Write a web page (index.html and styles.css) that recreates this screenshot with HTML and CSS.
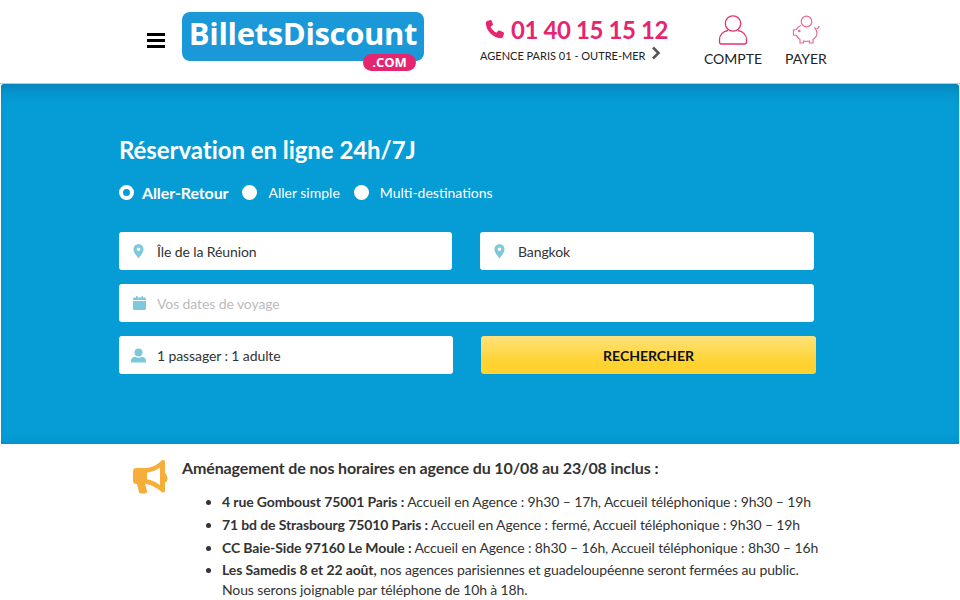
FILE: index.html
```html
<!DOCTYPE html>
<html lang="fr">
<head>
    <meta charset="UTF-8">
    <meta name="viewport" content="width=device-width, initial-scale=1.0">
    <title>BilletsDiscount</title>
    <link rel="stylesheet" href="styles.css">
</head>
<body>
    <header class="topbar">
        <div class="burger"><span></span><span></span><span></span></div>
        <div class="logo">
            <span class="logo-name">BilletsDiscount</span>
            <span class="logo-com">.COM</span>
        </div>
        <div class="phone">
            <div class="phone-number">
                <svg class="phone-icon" viewBox="0 0 24 24"><path d="M6.6 1.2 2.6 2.4C1.4 2.9.9 4 1 5.4c.6 9 8.600 17 17.600 17.600 1.400.1 2.500-.4 3-1.600l1.200-4c.2-.7-.1-1.300-.8-1.600l-4.600-2c-.6-.3-1.200-.1-1.600.4l-1.900 2.400c-3.200-1.500-5.700-4-7.200-7.200l2.400-1.900c.5-.4.700-1 .4-1.600l-2-4.600C7.900 1.300 7.300 1 6.600 1.200z"/></svg>
                <span>01 40 15 15 12</span>
            </div>
            <div class="phone-agency">
                <span>AGENCE PARIS 01 - OUTRE-MER</span>
                <svg class="chevron" viewBox="0 0 10 14"><path d="M2 1.500 7.500 7 2 12.500" /></svg>
            </div>
        </div>
        <a class="account">
            <svg class="account-icon" viewBox="0 0 30 30"><circle cx="15" cy="8.500" r="7.700"/><path d="M10 15.500C5 16.500 1.500 20 1.500 24.500v2.500c0 1.300.8 2 2 2h23c1.200 0 2-.7 2-2v-2.500c0-4.500-3.500-8-8.500-9"/></svg>
            <span>COMPTE</span>
        </a>
        <a class="pay">
            <svg class="pay-icon" viewBox="0 0 30 30"><circle cx="15.500" cy="6.500" r="5.300"/><path d="M10 10.500C7.500 11.500 6 13 5.500 14.500L2.500 15v5l3 .5c.7 1.700 1.800 3 3.500 4V28h3.500v-2c2 .5 4 .5 6 0v2H22v-3.500c2.500-1.700 4-4 4-6.500 0-2.200-1-4-2.500-5.500"/><path d="M25.500 13.500c1.500 0 2.500-1 2.500-2.500"/><circle cx="8.300" cy="16" r=".7"/></svg>
            <span>PAYER</span>
        </a>
    </header>

    <section class="search">
        <h1>Réservation en ligne 24h/7J</h1>
        <div class="trip-types">
            <span class="radio radio-on"></span>
            <span class="trip-label trip-label-on">Aller-Retour</span>
            <span class="radio"></span>
            <span class="trip-label">Aller simple</span>
            <span class="radio"></span>
            <span class="trip-label">Multi-destinations</span>
        </div>
        <div class="form-row">
            <div class="field field-from">
                <svg class="field-icon" viewBox="0 0 12 16"><path fill-rule="evenodd" d="M6 0C2.700 0 .5 2.400.5 5.500.5 9 4 13 6 15.500 8 13 11.500 9 11.500 5.500 11.500 2.400 9.300 0 6 0zm0 3.500a2 2 0 1 1 0 4 2 2 0 0 1 0-4z"/></svg>
                <span>Île de la Réunion</span>
            </div>
            <div class="field field-to">
                <svg class="field-icon" viewBox="0 0 12 16"><path fill-rule="evenodd" d="M6 0C2.700 0 .5 2.400.5 5.500.5 9 4 13 6 15.500 8 13 11.500 9 11.500 5.500 11.500 2.400 9.300 0 6 0zm0 3.500a2 2 0 1 1 0 4 2 2 0 0 1 0-4z"/></svg>
                <span>Bangkok</span>
            </div>
        </div>
        <div class="form-row">
            <div class="field field-dates">
                <svg class="field-icon field-icon-cal" viewBox="0 0 13 14"><path d="M0 5h13v7.500c0 .8-.6 1.500-1.500 1.500h-10C.6 14 0 13.300 0 12.500zM1.500 1.500H3V0h1.500v1.500h4V0H10v1.500h1.500c.9 0 1.500.7 1.500 1.500v1H0V3c0-.8.6-1.500 1.500-1.500z"/></svg>
                <span class="placeholder">Vos dates de voyage</span>
            </div>
        </div>
        <div class="form-row form-row-last">
            <div class="field field-people">
                <svg class="field-icon field-icon-wide" viewBox="0 0 15 14"><circle cx="7.500" cy="4" r="4"/><path d="M0 14v-2c0-2 1.500-3.500 4-3.800 2 1.300 5 1.300 7 0 2.500.3 4 1.800 4 3.800v2z"/></svg>
                <span>1 passager : 1 adulte</span>
            </div>
            <button class="submit">RECHERCHER</button>
        </div>
    </section>

    <section class="notice">
        <svg class="notice-icon" viewBox="0 0 36 36"><path d="M31 1c-1 0-1.500.5-2 1-4 4-10 7-15 7H4C2 9 1 10.500 1 12v10c0 1.500 1 3 3 3h1l2 8c.3 1 1 1.500 2 1.500h4c1.500 0 2.300-1.300 2-2.500l-1.800-7c5 .6 11.500 3.500 15.800 7.500.5.500 1 1 2 1 1.500 0 2-1 2-2v-8c1.500-.5 2.500-2 2.500-3.500S34.500 14.500 33 14V3c0-1-.5-2-2-2zm-3 7.500v17.500c-4-3-8.500-5-13-5.800v-6.400c4.500-.8 9-2.500 13-5.300z" /></svg>
        <div class="notice-body">
            <h2>Aménagement de nos horaires en agence du 10/08 au 23/08 inclus :</h2>
            <ul>
                <li><b>4 rue Gomboust 75001 Paris :</b> Accueil en Agence : 9h30 – 17h, Accueil téléphonique : 9h30 – 19h</li>
                <li><b>71 bd de Strasbourg 75010 Paris :</b> Accueil en Agence : fermé, Accueil téléphonique : 9h30 – 19h</li>
                <li><b>CC Baie-Side 97160 Le Moule :</b> Accueil en Agence : 8h30 – 16h, Accueil téléphonique : 8h30 – 16h</li>
                <li class="last"><b>Les Samedis 8 et 22 août,</b> nos agences parisiennes et guadeloupéenne seront fermées au public.<br>Nous serons joignable par téléphone de 10h à 18h.</li>
            </ul>
        </div>
    </section>
</body>
</html>
```

FILE: styles.css
```css
/* General */
html, body {
    height: 600px;
    overflow: hidden;
}

body {
    margin: 0;
    font-family: Lato, "Liberation Sans", sans-serif;
    background-color: #ffffff;
    color: #222;
}

/* Header */
.topbar {
    display: flex;
    align-items: flex-start;
    height: 84px;
    box-sizing: border-box;
    padding-left: 147px;
    border-bottom: 1px solid #b9c9d2;
}

.burger {
    display: flex;
    flex-direction: column;
    gap: 3px;
    width: 18px;
    margin-top: 33px;
}

.burger span {
    height: 3px;
    background-color: #000;
}

.logo {
    position: relative;
    width: 242px;
    height: 49px;
    margin: 12px 0 0 17px;
    background-color: #1b98d8;
    border-radius: 8px;
    text-align: center;
}

.logo-name {
    font-family: "Open Sans", sans-serif;
    font-weight: 700;
    font-size: 31px;
    line-height: 42px;
    letter-spacing: -0.35px;
    color: #fff;
}

.logo-com {
    position: absolute;
    right: 8px;
    bottom: -10px;
    width: 53px;
    height: 17px;
    border-radius: 9px;
    background-color: #e5266f;
    color: #fff;
    font-family: "Open Sans", sans-serif;
    font-weight: 700;
    font-size: 13px;
    line-height: 17px;
}

.phone {
    width: 200px;
    margin-left: 56px;
}

.phone-number {
    display: flex;
    align-items: center;
    gap: 6px;
    margin: 13px 0 0 5px;
    height: 32px;
    color: #e5266f;
    font-size: 24px;
    font-weight: 700;
    letter-spacing: -0.4px;
    white-space: nowrap;
}

.phone-icon {
    width: 20px;
    height: 20px;
    fill: #e5266f;
}

.phone-agency {
    display: flex;
    align-items: center;
    gap: 6px;
    margin-top: 4px;
    font-size: 11px;
    white-space: nowrap;
    color: #222;
}

.chevron {
    width: 10px;
    height: 14px;
    margin-top: -5px;
    fill: none;
    stroke: #555;
    stroke-width: 2.600;
}

.account, .pay {
    display: flex;
    flex-direction: column;
    align-items: center;
    font-size: 14px;
    color: #222;
}

.account {
    width: 60px;
    margin: 15px 0 0 23px;
}

.pay {
    width: 44px;
    margin: 15px 0 0 21px;
}

.account-icon {
    width: 30px;
    height: 30px;
    fill: none;
    stroke: #e5326f;
    stroke-width: 1.300;
}

.pay-icon {
    width: 30px;
    height: 30px;
    fill: none;
    stroke: #ea6a92;
    stroke-width: 1.200;
}

.account span, .pay span {
    margin-top: 5px;
    line-height: 17px;
}

/* Search */
.search {
    height: 360px;
    box-sizing: border-box;
    padding: 51px 0 0 118px;
    margin: 0 1px;
    border-radius: 3px 3px 0 0;
    background-color: #069cd5;
    box-shadow: inset 0 14px 14px -10px rgba(0, 70, 110, 0.35), inset 0 -8px 10px -8px rgba(0, 70, 110, 0.25);
    color: #fff;
}

.search h1 {
    margin: 0;
    font-size: 24px;
    font-weight: 700;
    line-height: 30px;
    letter-spacing: -0.05px;
}

.trip-types {
    display: flex;
    align-items: center;
    height: 20px;
    margin: 17px 0 30px;
    font-size: 14px;
}

.radio {
    box-sizing: border-box;
    width: 15px;
    height: 15px;
    border-radius: 50%;
    background-color: #fff;
}

.radio-on {
    border: 4px solid #fff;
    background-color: #069cd5;
}

.trip-label {
    margin: 0 14px 0 11px;
}

.trip-label-on {
    margin: 0 14px 0 8px;
    font-size: 16px;
    font-weight: 700;
    letter-spacing: -0.1px;
}

.form-row {
    display: flex;
    margin: 0 0 14px;
}

.form-row-last {
    margin-bottom: 0;
}

.field {
    display: flex;
    align-items: center;
    box-sizing: border-box;
    height: 38px;
    padding-left: 14px;
    background-color: #fff;
    border-radius: 3px;
    color: #333;
    font-size: 14px;
    letter-spacing: -0.1px;
}

.field-from {
    width: 333px;
}

.field-to {
    width: 334px;
    margin-left: 28px;
}

.field-dates {
    width: 695px;
}

.field-people {
    width: 334px;
}

.field-icon {
    width: 11px;
    height: 15px;
    margin-right: 13px;
    fill: #7ec8dc;
}

.field-icon-cal {
    width: 13px;
    height: 14px;
    margin-right: 11px;
}

.field-icon-wide {
    width: 15px;
    margin-left: -2px;
    margin-right: 11px;
}

.placeholder {
    color: #bbb;
}

.submit {
    width: 335px;
    height: 38px;
    margin-left: 28px;
    padding: 0;
    border: none;
    border-radius: 3px;
    background: linear-gradient(#ffe27c, #fed22f 70%);
    color: #111;
    font-family: Lato, sans-serif;
    font-size: 14px;
    font-weight: 700;
}

/* Notice */
.notice {
    display: flex;
    padding: 0 0 0 132px;
}

.notice-icon {
    flex: none;
    width: 36px;
    height: 36px;
    margin-top: 15px;
    fill: #f6ae3a;
}

.notice-body {
    margin-left: 14px;
}

.notice h2 {
    margin: 14px 0 14px;
    font-size: 16px;
    line-height: 20px;
    font-weight: 700;
    letter-spacing: -0.12px;
    color: #333;
}

.notice ul {
    margin: 0;
    padding-left: 40px;
    font-size: 14px;
    line-height: 20px;
    letter-spacing: -0.12px;
    color: #333;
}

.notice li {
    margin-bottom: 3px;
}

.notice li:nth-child(3) {
    margin-bottom: 2px;
}
```
